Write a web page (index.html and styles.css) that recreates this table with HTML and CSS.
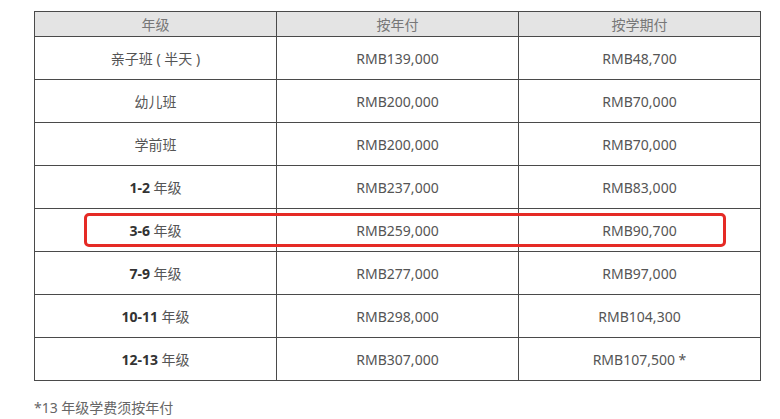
FILE: index.html
```html
<!DOCTYPE html>
<html lang="zh">
<head>
<meta charset="utf-8">
<link rel="stylesheet" href="styles.css">
</head>
<body>
<div class="wrap">
  <table class="fees">
    <thead>
      <tr><th>年级</th><th>按年付</th><th>按学期付</th></tr>
    </thead>
    <tbody>
      <tr><td>亲子班 ( 半天 )</td><td>RMB139,000</td><td>RMB48,700</td></tr>
      <tr><td>幼儿班</td><td>RMB200,000</td><td>RMB70,000</td></tr>
      <tr><td>学前班</td><td>RMB200,000</td><td>RMB70,000</td></tr>
      <tr><td><b>1-2</b> 年级</td><td>RMB237,000</td><td>RMB83,000</td></tr>
      <tr><td><b>3-6</b> 年级</td><td>RMB259,000</td><td>RMB90,700</td></tr>
      <tr><td><b>7-9</b> 年级</td><td>RMB277,000</td><td>RMB97,000</td></tr>
      <tr><td><b>10-11</b> 年级</td><td>RMB298,000</td><td>RMB104,300</td></tr>
      <tr><td><b>12-13</b> 年级</td><td>RMB307,000</td><td>RMB107,500 *</td></tr>
    </tbody>
  </table>
  <div class="highlight"></div>
</div>
<p class="note">*13 年级学费须按年付</p>
</body>
</html>
```
FILE: styles.css
```css
html, body {
  margin: 0;
  padding: 0;
  background: #fff;
}
body {
  padding: 11px 0 0 34px;
  font-family: "Noto Sans", "Noto Sans CJK SC", sans-serif;
  color: #555;
}
.wrap {
  position: relative;
  width: 727px;
}
.fees {
  border-collapse: collapse;
  width: 727px;
  table-layout: fixed;
}
.fees th, .fees td {
  border: 1px solid #4a4a4a;
  text-align: center;
  padding: 0;
  font-size: 14px;
}
.fees th {
  height: 24px;
  background: #e4e4e4;
  font-weight: normal;
  color: #777;
}
.fees td {
  height: 42px;
  color: #555;
}
.fees b {
  color: #333;
  font-weight: 700;
}
.highlight {
  position: absolute;
  left: 50px;
  top: 202px;
  width: 636px;
  height: 28px;
  border: 3px solid #e52a25;
  border-radius: 5px;
}
.note {
  margin: 17px 0 0 0;
  font-size: 14px;
  line-height: 20px;
  color: #666;
}
```
